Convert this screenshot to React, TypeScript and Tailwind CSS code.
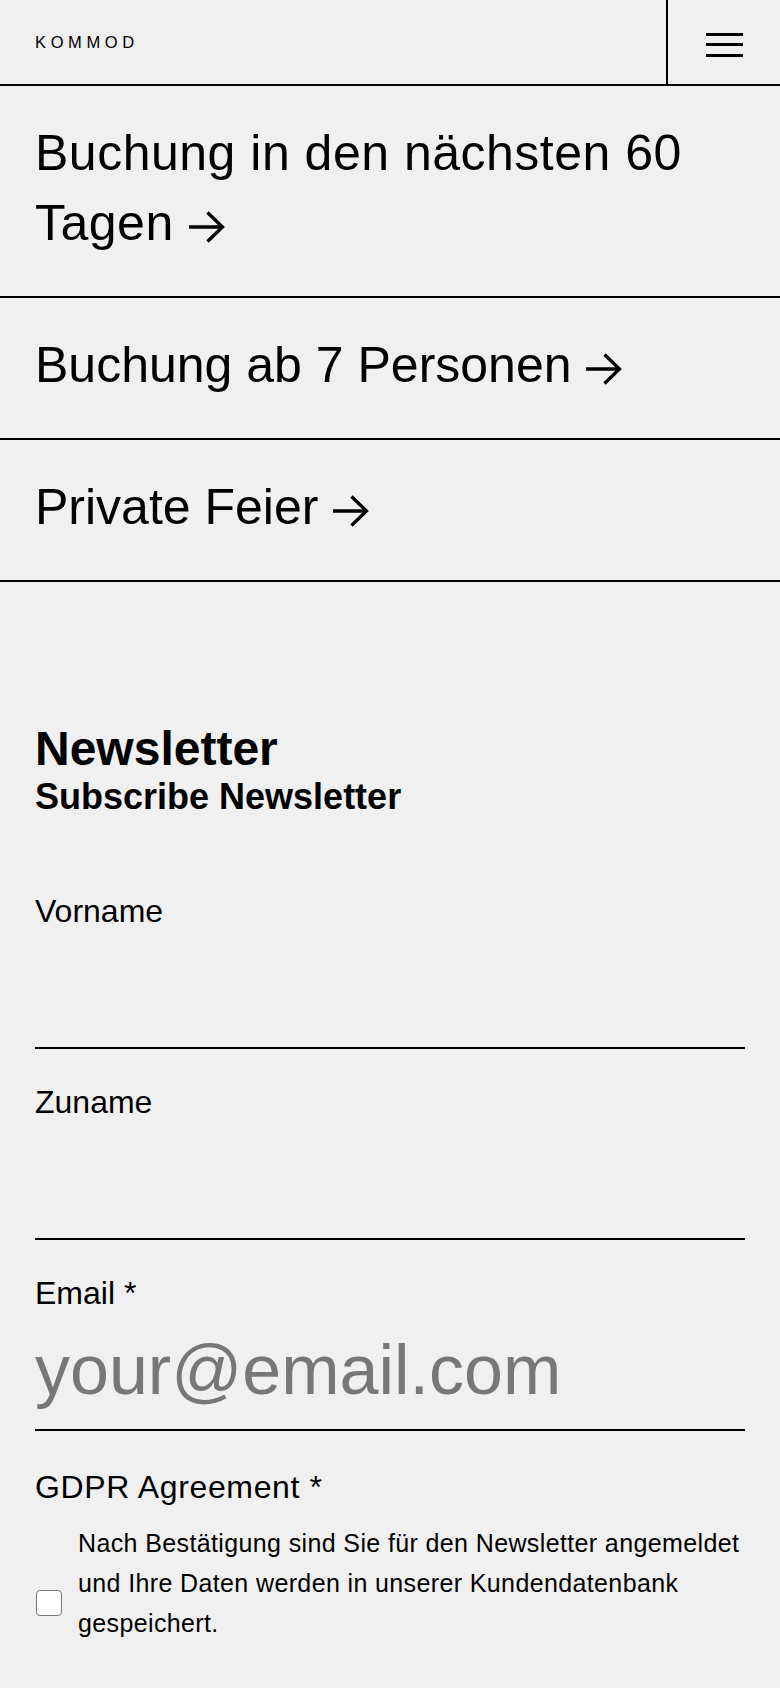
import React from "react";

function Arrow() {
  return (
    <svg
      width="38"
      height="32"
      viewBox="0 0 38 32"
      className="inline-block align-[-3px]"
      fill="none"
      stroke="currentColor"
      strokeWidth="3.3"
    >
      <path d="M1 16 H35" />
      <path d="M19.5 1.5 L34.5 16 L19.5 30.5" />
    </svg>
  );
}

function Row({ children, wide }: { children: React.ReactNode; wide?: boolean }) {
  return (
    <a
      href="#"
      className={
        wide
          ? "block border-b-2 border-black px-[35px] pt-[32px] pb-[38px] text-[50px] leading-[70px] tracking-[0.01em] text-black no-underline"
          : "block border-b-2 border-black px-[35px] pt-[32px] pb-[38px] text-[50px] leading-[70px] text-black no-underline"
      }
    >
      {children} <Arrow />
    </a>
  );
}

function Field({
  label,
  placeholder,
  first,
}: {
  label: string;
  placeholder?: string;
  first?: boolean;
}) {
  return (
    <div className={first ? "" : "mt-[36px]"}>
      <label className="block text-[32px] leading-[34px]">{label}</label>
      <input
        type="text"
        placeholder={placeholder}
        className="block h-[121px] w-full border-b-2 border-black bg-transparent p-0 text-[70px] text-black outline-none placeholder:text-[#777777]"
      />
    </div>
  );
}

export default function App() {
  return (
    <div className="min-h-[1688px] bg-[#f0f0f0] text-black font-['Liberation_Sans',Arial,sans-serif]">
      <header className="flex h-[86px] border-b-2 border-black">
        <div className="flex flex-1 items-center pl-[35px]">
          <span className="text-[16.5px] tracking-[0.28em]">KOMMOD</span>
        </div>
        <button className="flex w-[114px] items-center justify-center border-l-2 border-black">
          <span className="mt-[5px] flex flex-col gap-[7.5px]">
            <span className="block h-[3px] w-[37px] bg-black" />
            <span className="block h-[3px] w-[37px] bg-black" />
            <span className="block h-[3px] w-[37px] bg-black" />
          </span>
        </button>
      </header>

      <nav>
        <Row wide>Buchung in den nächsten 60 Tagen</Row>
        <Row>Buchung ab 7 Personen</Row>
        <Row>Private Feier</Row>
      </nav>

      <section className="px-[35px] pt-[143px] pb-[40px]">
        <h2 className="text-[48px] font-bold leading-[48px]">Newsletter</h2>
        <h3 className="text-[36px] font-bold leading-[48px]">Subscribe Newsletter</h3>

        <form className="mt-[73px]">
          <Field label="Vorname" first />
          <Field label="Zuname" />
          <Field label="Email *" placeholder="your@email.com" />

          <div className="mt-[39px]">
            <div className="text-[32px] leading-[34px] tracking-[0.02em]">GDPR Agreement *</div>
            <div className="mt-[19px] flex items-start gap-[16px]">
              <span className="ml-[1px] mt-[67px] block h-[26px] w-[26px] shrink-0 rounded-[4px] border-[1.5px] border-[#777777] bg-white" />
              <p className="text-[25px] leading-[40px] tracking-[0.015em]">
                Nach Bestätigung sind Sie für den Newsletter angemeldet und Ihre Daten werden in unserer Kundendatenbank gespeichert.
              </p>
            </div>
          </div>
        </form>
      </section>
    </div>
  );
}
